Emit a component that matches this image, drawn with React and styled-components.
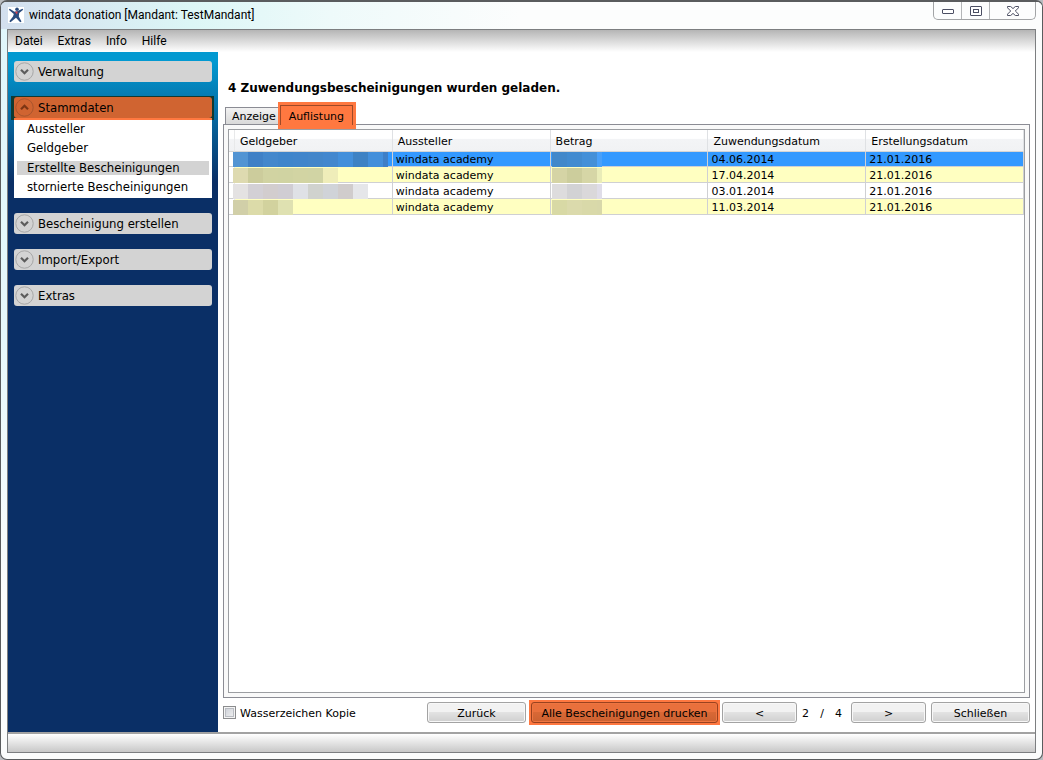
import React, { useState } from "react";
import styled, { createGlobalStyle, css } from "styled-components";

const verdana = `"DejaVu Sans", Verdana, sans-serif`;
const tahoma = `"DejaVu Sans Condensed", Tahoma, sans-serif`;
const segoe = `Roboto, "Segoe UI", sans-serif`;

const GlobalStyle = createGlobalStyle`
  *, *::before, *::after { box-sizing: border-box; }
  body { margin: 0; background: #b9bcc0; }
  button, input { font: inherit; color: inherit; margin: 0; }
`;

const Window = styled.div`
  display: flex;
  flex-direction: column;
  min-height: 100vh;
  padding: 0 6px;
  padding-bottom: 6px;
  border: 1px solid #5a5c5e;
  border-top-width: 2px;
  border-radius: 7px;
  background:
    linear-gradient(#e0f6fb, #e6f8fb 330px, #fbfcfc 600px) left / 8px 100% no-repeat,
    #fbfcfc;
  font: 11px/16px ${verdana};
  color: #000;
`;

const TitleBar = styled.header`
  display: flex;
  align-items: flex-start;
  height: 27px;
  margin: 0 -6px;
  padding: 0 6px;
  border-radius: 5px 5px 0 0;
  background: linear-gradient(90deg, #d3dfee 0, #dcf6f6 190px, #eefafa 330px, #fcfdfd 520px);
`;

const AppIcon = styled.svg`
  width: 16px;
  height: 16px;
  margin: 5px 5px 0 1px;
  background: #fff;
`;

const Title = styled.h1`
  flex: 1;
  margin: 5px 0 0;
  font: 12px/16px ${segoe};
`;

const WindowControls = styled.div`
  display: flex;
  height: 18px;
  border: 1px solid #a2a4a6;
  border-top: 0;
  border-radius: 0 0 5px 5px;
`;

const ControlButton = styled.button`
  display: grid;
  place-items: center;
  width: ${(p) => p.$width}px;
  padding: 0;
  border: 0;
  background: none;
  & + & { border-left: 1px solid #b4b6b8; }
`;

const Client = styled.div`
  flex: 1;
  display: flex;
  flex-direction: column;
  border: 1px solid #7c7e80;
  background: #fff;
`;

const MenuBar = styled.nav`
  display: flex;
  gap: 15px;
  height: 22px;
  padding: 3px 7px;
  background: linear-gradient(#b5b5b5, #fff);
  font: 12px/16px ${segoe};
`;

const MenuItem = styled.button`
  padding: 0;
  border: 0;
  background: none;
`;

const Body = styled.div`
  flex: 1;
  display: flex;
`;

const Sidebar = styled.aside`
  display: flex;
  flex-direction: column;
  gap: 15px;
  width: 210px;
  padding: 9px 6px;
  background: linear-gradient(#0299d1 0, #0299d1 10px, #0a2f66 130px);
  font: 13px/20px ${tahoma};
`;

const GroupFrame = styled.div`
  ${(p) =>
    p.$marked &&
    css`
      margin: -1px -2px 0 -3px;
      padding: 1px 2px 0 3px;
      background: #113a32;
    `}
`;

const GroupHeader = styled.button`
  display: flex;
  align-items: center;
  gap: 4px;
  width: 100%;
  height: 21px;
  padding: 0 1px;
  border: 0;
  border-radius: 3px;
  background: ${(p) => (p.$marked ? "#d06431" : "#d3d3d3")};
  text-align: left;
`;

const MarkEdge = styled.div`
  height: 2px;
  background: #ff7840;
`;

const GroupList = styled.ul`
  margin: 0;
  padding: 0 3px 1px;
  list-style: none;
  background: #fff;
`;

const GroupLink = styled.a`
  display: block;
  margin: ${(p) => (p.$current ? "3px 0" : "0")};
  padding: 0 10px ${(p) => (p.$current ? 0 : 2)}px;
  line-height: ${(p) => (p.$current ? 14 : 17)}px;
  background: ${(p) => (p.$current ? "#d3d3d3" : "transparent")};
  color: #000;
  text-decoration: none;
`;

const Main = styled.main`
  flex: 1;
  display: flex;
  flex-direction: column;
  min-width: 0;
  padding: 26px 5px 6px;
`;

const Heading = styled.h2`
  margin: 0 0 4px;
  padding-left: 5px;
  font: bold 12px/20px ${verdana};
`;

const TabList = styled.div`
  display: flex;
  align-items: flex-end;
  height: 27px;
  margin-bottom: -5px;
  padding-left: 2px;
  z-index: 1;
`;

const Tab = styled.button`
  align-self: flex-start;
  height: 17px;
  margin-top: 5px;
  padding: 0 2px 0 6px;
  border: 1px solid #8b8c94;
  border-width: 1px 0 0 1px;
  background: linear-gradient(#f2f2f2, #d9d9d9);
  line-height: 17px;
`;

const MarkedTab = styled.div`
  display: flex;
  width: 78px;
  height: 27px;
  padding: 3px 3px 4px 2px;
  background: #ff7840;
`;

const ActiveTab = styled.button`
  flex: 1;
  padding: 2px 0 0;
  border: 1px solid #9e4a28;
  border-bottom: 0;
  background: #ff7840;
`;

const TabPanel = styled.section`
  flex: 1;
  display: flex;
  padding: 4px;
  border: 1px solid #8b8c94;
  background: #f9f9f9;
`;

const ListView = styled.div`
  flex: 1;
  border: 1px solid #9c9ea2;
  background: #fff;
`;

const Grid = styled.table`
  width: 100%;
  table-layout: fixed;
  border-collapse: separate;
  border-spacing: 0;
  th, td {
    padding: 0 0 0 3px;
    border-right: 1px solid #cfd0d3;
    text-align: left;
    font-weight: normal;
    white-space: nowrap;
  }
  th:first-child, td:first-child { width: 6px; padding: 0; border-right-color: #e8e9ea; }
`;

const ColumnHead = styled.th`
  height: 22px;
  border-bottom: 1px solid #d5d5d5;
  background: linear-gradient(#fff 40%, #f3f4f6 45%, #f1f2f4);
  && { padding: 2px 0 0 5px; border-right-color: #dfe1e4; }
`;

const Row = styled.tr`
  height: ${(p) => (p.$selected ? 15 : 16)}px;
  line-height: ${(p) => (p.$selected ? 14 : 15)}px;
  td { border-bottom: 1px solid #cfd0d3; }
  td:not(:first-child) {
    background: ${(p) => (p.$selected ? "#3399ff" : p.$striped ? "#ffffc1" : "#fff")};
  }
`;

const CellText = styled.span`
  display: block;
  height: 14px;
  line-height: 16px;
`;

const Redacted = styled.div`
  display: flex;
  width: max-content;
  height: 15px;
  margin: 0 0 -1px ${(p) => (p.$outset ? -5 : -2)}px;
`;

const Block = styled.span`
  width: ${(p) => p.$width}px;
  background: ${(p) => p.$color};
`;

const Footer = styled.footer`
  display: flex;
  align-items: center;
  height: 28px;
  padding-top: 1px;
`;

const CheckLabel = styled.label`
  display: flex;
  align-items: center;
  gap: 4px;
  margin-right: auto;
`;

const CheckText = styled.span`
  padding-top: 2px;
`;

const CheckBox = styled.input`
  appearance: none;
  width: 13px;
  height: 13px;
  border: 1px solid #8b8c8e;
  background: linear-gradient(135deg, #c8ccd4, #f4f4f4);
  box-shadow: inset 0 0 0 1px #f4f4f4, inset 0 0 0 2px #b9bcc2;
`;

const PushButton = styled.button`
  width: ${(p) => p.$width}px;
  height: 21px;
  padding: 2px 0 0;
  border: 1px solid ${(p) => (p.$marked ? "#99421f" : "#a3a3a3")};
  border-radius: 3px;
  background: ${(p) =>
    p.$marked
      ? "linear-gradient(#e9703c 45%, #d96835 50%, #cb6131)"
      : "linear-gradient(#f2f2f2 45%, #e2e2e2 50%, #cfcfcf)"};
  box-shadow: inset 0 0 0 1px ${(p) => (p.$marked ? "#ef7540" : "#f8f8f8")};
`;

const ButtonMark = styled.div`
  display: flex;
  margin: 0 2px 0 3px;
  padding: 2px;
  background: #ff7840;
`;

const Pager = styled.div`
  display: flex;
  align-items: center;
  margin-right: 5px;
`;

const PageNumber = styled.span`
  display: flex;
  justify-content: space-between;
  width: 54px;
  padding: 2px 9px 0 5px;
`;

const StatusBar = styled.div`
  height: 20px;
  border-top: 2px solid #a2a2a2;
  background: linear-gradient(#fff, #c8c8c8);
`;

const Chevron = ({ up, marked }) => (
  <svg width="19" height="19" viewBox="0 0 19 19" fill="none" aria-hidden="true">
    <circle cx="9.5" cy="9.5" r="8.7" stroke={marked ? "#a8542d" : "#a6a6a6"} />
    <path
      d={up ? "M6 11.200 9.500 7.700l3.500 3.500" : "M6 7.800l3.500 3.500 3.500-3.500"}
      stroke={marked ? "#7c3514" : "#5c5c5c"}
      strokeWidth="2.200"
    />
  </svg>
);

const groups = [
  { name: "Verwaltung" },
  {
    name: "Stammdaten",
    items: ["Aussteller", "Geldgeber", "Erstellte Bescheinigungen", "stornierte Bescheinigungen"],
  },
  { name: "Bescheinigung erstellen" },
  { name: "Import/Export" },
  { name: "Extras" },
];

const rows = [
  {
    date: "04.06.2014",
    donor: ["#5294d3", "#3f80c6", "#4387cc", "#3f85cb", "#4185cb", "#4386ca", "#4387ce", "#438fdb", "#3e82c4", "#438fdb", "#3e7fc7"],
    amount: ["#4288ca", "#428bd0", "#4490d8", "#48a0fa"],
  },
  {
    date: "17.04.2014",
    donor: ["#dedab0", "#cccc9c", "#d1d3a2", "#d0d3a2", "#d2d4a3", "#d1d4a4", "#efedb9"],
    amount: ["#d5d4a5", "#cccd9c", "#d6d6a6", "#e9ecb8"],
  },
  {
    date: "03.01.2014",
    donor: ["#e4e2e2", "#d3d0d5", "#d2cdce", "#d0cdd3", "#dfe1e6", "#d0d2ce", "#d0d3d8", "#d0cccc", "#e5e6e9"],
    amount: ["#dddcdd", "#d2d2d4", "#dad8da", "#dfdde8"],
  },
  {
    date: "11.03.2014",
    donor: ["#d1cfa8", "#dcdba9", "#d2d29e", "#dfe1b1"],
    amount: ["#d8d9a5", "#dbdaac", "#d9d9a9", "#d8d8aa"],
  },
];

const Mosaic = ({ colors, outset }) => (
  <Redacted $outset={outset}>
    {colors.map((c, i) => (
      <Block key={i} $color={c} $width={(outset && i === 10) || (!outset && i === 3) ? 5 : 15} />
    ))}
  </Redacted>
);

export default function App() {
  const [copy, setCopy] = useState(false);
  return (
    <>
      <GlobalStyle />
      <Window>
        <TitleBar>
          <AppIcon viewBox="0 0 16 16" aria-hidden="true">
            <circle cx="9" cy="2.200" r="1.800" fill="#2a4c7e" />
            <path d="M.8 2.800l1-1 4.700 3L9 4.200l5.500-2.500.7 1L11.200 6l-.4 3.500 2.700 5-1.300.7L8 10.800l-5.500 4.400-1.200-1L5 9.500 5.800 7z" fill="#2a4c7e" />
            <path d="M6.800 4.800l3-.4-.8 3z" fill="#d5404c" />
          </AppIcon>
          <Title>windata donation [Mandant: TestMandant]</Title>
          <WindowControls>
            <ControlButton $width={27} aria-label="Minimieren">
              <svg width="12" height="8" viewBox="0 0 12 8"><rect x=".5" y="2.500" width="11" height="4" rx=".5" fill="#fff" stroke="#4b4f63" /></svg>
            </ControlButton>
            <ControlButton $width={28} aria-label="Maximieren">
              <svg width="12" height="10" viewBox="0 0 12 10" fill="#fff" stroke="#4b4f63"><rect x=".5" y=".5" width="11" height="9" rx=".5" /><rect x="3.500" y="3.500" width="5" height="3" /></svg>
            </ControlButton>
            <ControlButton $width={46} aria-label="Fenster schließen">
              <svg width="12" height="10" viewBox="0 0 12 10"><path d="M.5.5h3.200L6 2.600 8.300.5h3.200v1.300L8.300 5l3.200 3.200v1.300H8.300L6 7.400 3.700 9.500H.5V8.200L3.700 5 .5 1.800z" fill="#fff" stroke="#4b4f63" /></svg>
            </ControlButton>
          </WindowControls>
        </TitleBar>
        <Client>
          <MenuBar>
            {["Datei", "Extras", "Info", "Hilfe"].map((m) => (
              <MenuItem key={m}>{m}</MenuItem>
            ))}
          </MenuBar>
          <Body>
            <Sidebar>
              {groups.map(({ name, items }) => (
                <div key={name}>
                  <GroupFrame $marked={!!items}>
                    <GroupHeader $marked={!!items} aria-expanded={!!items}>
                      <Chevron up={!!items} marked={!!items} />
                      {name}
                    </GroupHeader>
                    {items && <MarkEdge />}
                  </GroupFrame>
                  {items && (
                    <GroupList>
                      {items.map((item, i) => (
                        <li key={item}>
                          <GroupLink href="#" $current={i === 2}>{item}</GroupLink>
                        </li>
                      ))}
                    </GroupList>
                  )}
                </div>
              ))}
            </Sidebar>
            <Main>
              <Heading>4 Zuwendungsbescheinigungen wurden geladen.</Heading>
              <TabList role="tablist">
                <Tab role="tab" aria-selected="false">Anzeige</Tab>
                <MarkedTab>
                  <ActiveTab role="tab" aria-selected="true">Auflistung</ActiveTab>
                </MarkedTab>
              </TabList>
              <TabPanel role="tabpanel">
                <ListView>
                  <Grid>
                    <thead>
                      <tr>
                        <ColumnHead />
                        {["Geldgeber", "Aussteller", "Betrag", "Zuwendungsdatum", "Erstellungsdatum"].map((h) => (
                          <ColumnHead key={h} scope="col">{h}</ColumnHead>
                        ))}
                      </tr>
                    </thead>
                    <tbody>
                      {rows.map((r, i) => (
                        <Row key={r.date} $selected={i === 0} $striped={i % 2 === 1}>
                          <td />
                          <td><Mosaic colors={r.donor} outset /></td>
                          <td><CellText>windata academy</CellText></td>
                          <td><Mosaic colors={r.amount} /></td>
                          <td><CellText>{r.date}</CellText></td>
                          <td><CellText>21.01.2016</CellText></td>
                        </Row>
                      ))}
                    </tbody>
                  </Grid>
                </ListView>
              </TabPanel>
              <Footer>
                <CheckLabel>
                  <CheckBox type="checkbox" checked={copy} onChange={(e) => setCopy(e.target.checked)} />
                  <CheckText>Wasserzeichen Kopie</CheckText>
                </CheckLabel>
                <PushButton $width={99}>Zurück</PushButton>
                <ButtonMark>
                  <PushButton $width={187} $marked>Alle Bescheinigungen drucken</PushButton>
                </ButtonMark>
                <Pager>
                  <PushButton $width={75}>&lt;</PushButton>
                  <PageNumber><span>2</span><span>/</span><span>4</span></PageNumber>
                  <PushButton $width={75}>&gt;</PushButton>
                </Pager>
                <PushButton $width={99}>Schließen</PushButton>
              </Footer>
            </Main>
          </Body>
          <StatusBar />
        </Client>
      </Window>
    </>
  );
}
